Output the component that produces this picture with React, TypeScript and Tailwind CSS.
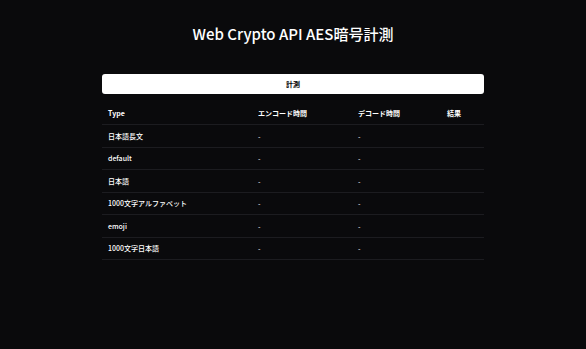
import React from 'react';

const rows = ['日本語長文', 'default', '日本語', '1000文字アルファベット', 'emoji', '1000文字日本語'];

export default function App() {
  return (
    <div
      className="min-h-[349px] w-full bg-[#0a0a0c] text-white"
      style={{ fontFamily: '"Noto Sans CJK JP", "Noto Sans", sans-serif' }}
    >
      <div className="mx-auto flex w-[382px] flex-col pt-[23px]">
        <h1 className="text-center text-[15px] font-medium leading-[22px]">Web Crypto API AES暗号計測</h1>
        <button className="mt-[29px] h-[20px] w-full rounded-[3px] bg-white text-[7px] font-bold text-black">
          計測
        </button>
        <div className="mt-[8px] text-[7px] leading-[10px]">
          <div className="grid h-[23px] grid-cols-[150px_100px_89px_1fr] items-center border-b border-[#1c1c20] font-bold">
            <div className="px-[6px]">Type</div>
            <div className="px-[6px]">エンコード時間</div>
            <div className="px-[6px]">デコード時間</div>
            <div className="px-[6px]">結果</div>
          </div>
          {rows.map(r => (
            <div
              key={r}
              className="grid h-[22.5px] grid-cols-[150px_100px_89px_1fr] items-center border-b border-[#1c1c20] font-medium"
            >
              <div className="px-[6px] text-white">{r}</div>
              <div className="px-[6px] text-[#dddddd]">-</div>
              <div className="px-[6px] text-[#dddddd]">-</div>
              <div className="px-[6px]"></div>
            </div>
          ))}
        </div>
      </div>
    </div>
  );
}
